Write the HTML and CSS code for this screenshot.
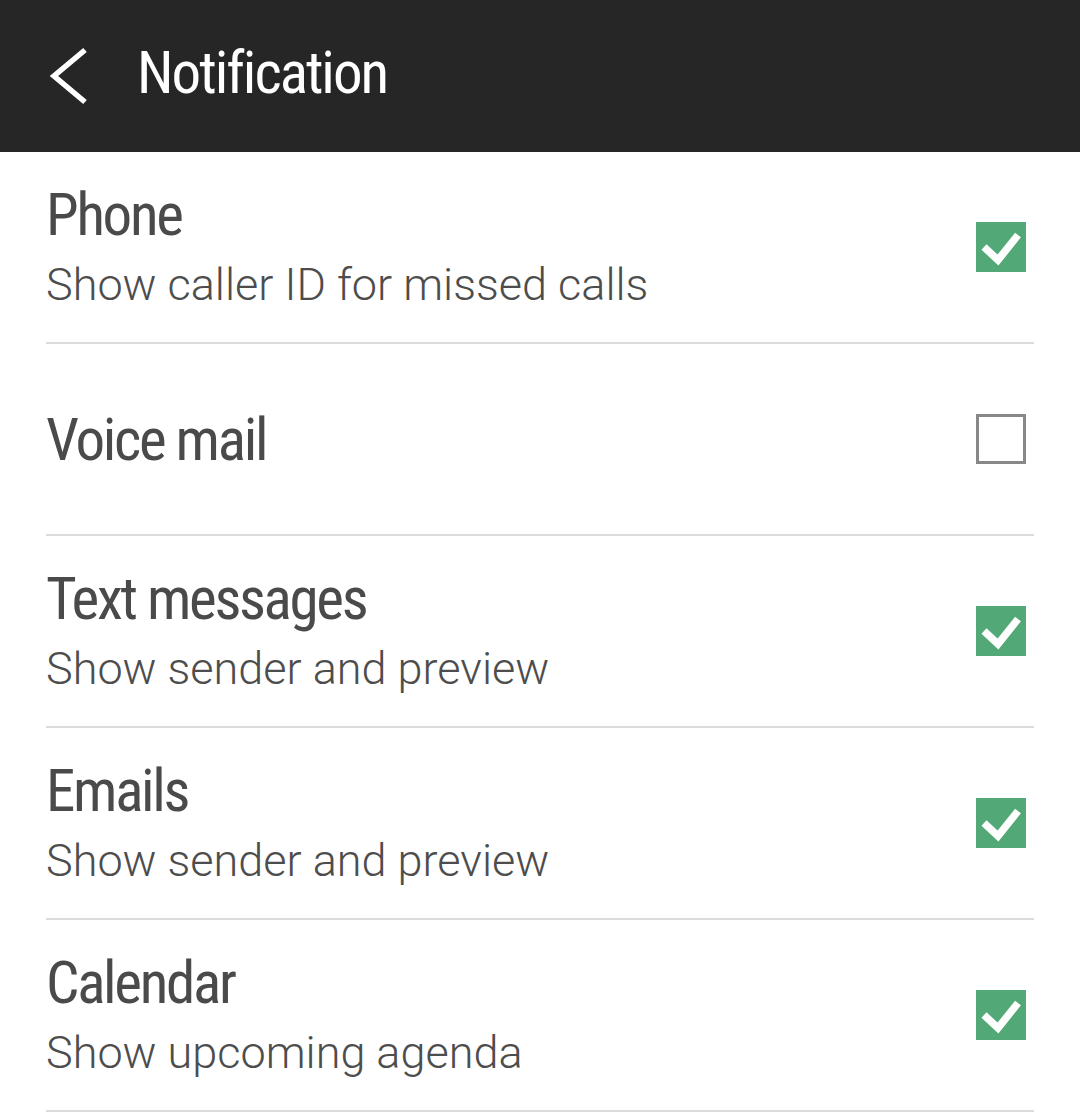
FILE: index.html
```html
<!DOCTYPE html>
<html>
<head>
<meta charset="utf-8">
<link rel="stylesheet" href="styles.css">
</head>
<body>
<header class="bar">
  <svg class="back" width="44" height="60" viewBox="0 0 44 60"><polyline points="37,4 6,30 37,56" fill="none" stroke="#fff" stroke-width="5.5"/></svg>
  <h1 class="title">Notification</h1>
</header>
<ul class="list">
  <li class="row">
    <div class="text"><div class="name">Phone</div><div class="desc">Show caller ID for missed calls</div></div>
    <span class="box on"><svg width="50" height="50" viewBox="0 0 50 50"><polyline points="8,25 22,38 42,13" fill="none" stroke="#fff" stroke-width="7.5"/></svg></span>
  </li>
  <li class="row">
    <div class="text"><div class="name">Voice mail</div></div>
    <span class="box off"></span>
  </li>
  <li class="row">
    <div class="text"><div class="name">Text messages</div><div class="desc">Show sender and preview</div></div>
    <span class="box on"><svg width="50" height="50" viewBox="0 0 50 50"><polyline points="8,25 22,38 42,13" fill="none" stroke="#fff" stroke-width="7.5"/></svg></span>
  </li>
  <li class="row">
    <div class="text"><div class="name">Emails</div><div class="desc">Show sender and preview</div></div>
    <span class="box on"><svg width="50" height="50" viewBox="0 0 50 50"><polyline points="8,25 22,38 42,13" fill="none" stroke="#fff" stroke-width="7.5"/></svg></span>
  </li>
  <li class="row">
    <div class="text"><div class="name">Calendar</div><div class="desc">Show upcoming agenda</div></div>
    <span class="box on"><svg width="50" height="50" viewBox="0 0 50 50"><polyline points="8,25 22,38 42,13" fill="none" stroke="#fff" stroke-width="7.5"/></svg></span>
  </li>
</ul>
</body>
</html>
```
FILE: styles.css
```css
html, body {
  margin: 0;
  padding: 0;
  background: #fff;
  font-family: Roboto, "Liberation Sans", sans-serif;
}
.bar {
  height: 152px;
  background: #262626;
  display: flex;
  align-items: center;
  padding-left: 48px;
  box-sizing: border-box;
}
.back {
  display: block;
  margin-right: 45px;
}
.title {
  margin: 0 0 7px 0;
  color: #fff;
  font-weight: 400;
  font-size: 59px;
  font-stretch: condensed;
  letter-spacing: -2px;
  line-height: 1;
}
.list {
  list-style: none;
  margin: 0 46px;
  padding: 0;
}
.row {
  height: 190px;
  border-bottom: 2px solid #dcdcdc;
  display: flex;
  align-items: center;
  justify-content: space-between;
  padding-right: 8px;
}
.text {
  display: flex;
  flex-direction: column;
  padding-top: 2px;
}
.name {
  color: #4a4a4a;
  font-size: 59px;
  font-stretch: condensed;
  letter-spacing: -2.3px;
  line-height: 68px;
}
.desc {
  color: #4d4d4d;
  font-size: 45px;
  font-weight: 300;
  line-height: 60px;
  margin-top: 6px;
}
.box {
  width: 50px;
  height: 50px;
  box-sizing: border-box;
  display: block;
}
.box svg { display: block; }
.on { background: #52a876; }
.off { border: 3px solid #888; }
```
